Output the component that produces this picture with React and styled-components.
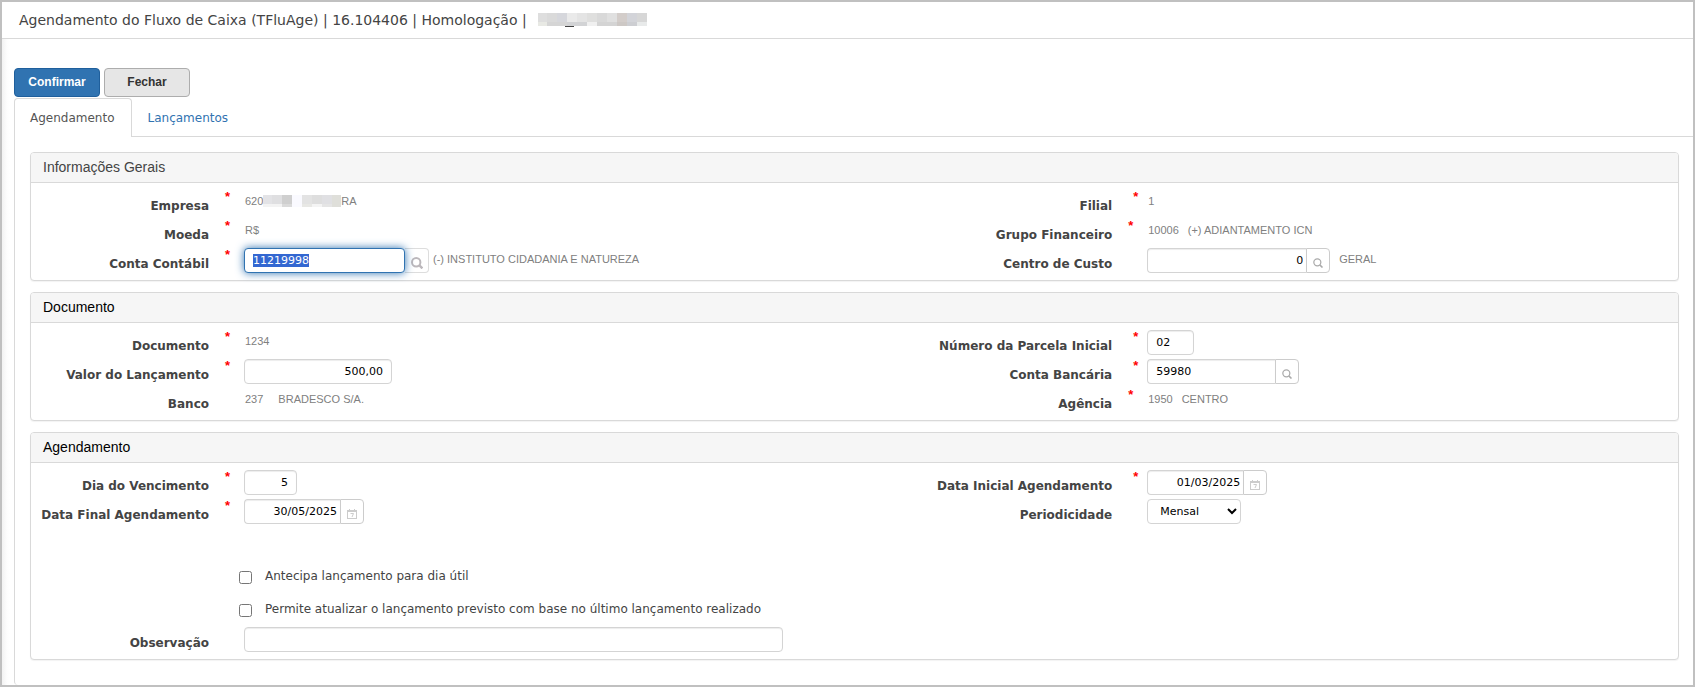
import React, { useEffect, useRef } from "react";
import styled, { createGlobalStyle } from "styled-components";

const verdana = `"DejaVu Sans", Verdana, sans-serif`;
const arial = `"Liberation Sans", Arial, sans-serif`;

const GlobalStyle = createGlobalStyle`
  *, *::before, *::after { box-sizing: border-box; }
  body { margin: 0; background: #fff; color: #444; font-family: ${verdana}; }
`;

const Page = styled.div`
  display: flex;
  flex-direction: column;
  min-height: 100vh;
  border: 2px solid #c0c0c0;
`;

const TitleBar = styled.header`
  display: flex;
  align-items: center;
  gap: 11px;
  height: 37px;
  padding-left: 17px;
  border-bottom: 1px solid #d9d9d9;
`;

const PageTitle = styled.h1`
  margin: 0;
  font-size: 14px;
  font-weight: 400;
  line-height: 20px;
  white-space: nowrap;
`;

const Body = styled.main`
  display: flex;
  flex-direction: column;
  flex: 1;
  padding: 29px 0 0 12px;
  background: linear-gradient(to right, #f2f2f2, #fdfdfd 5px, #fff 8px);
`;

const Toolbar = styled.div`
  display: flex;
  gap: 4px;
`;

const ActionButton = styled.button`
  width: 86px;
  height: 29px;
  padding: 0 0 2px;
  border: 1px solid ${(p) => (p.$primary ? "#1f5f9c" : "#adadad")};
  border-radius: 4px;
  background: ${(p) => (p.$primary ? "#3073b1" : "#e6e6e6")};
  color: ${(p) => (p.$primary ? "#fff" : "#333")};
  font: bold 12px ${arial};
`;

const TabBar = styled.nav`
  display: flex;
  margin-top: 1px;
  height: 39px;
  border-bottom: 1px solid #d9d9d9;
`;

const Tab = styled.a`
  height: 39px;
  padding: 0 16px 0 15px;
  border: 1px solid ${(p) => (p.$active ? "#d9d9d9" : "transparent")};
  border-bottom: 0;
  border-radius: 4px 4px 0 0;
  background: ${(p) => (p.$active ? "#fff" : "transparent")};
  color: ${(p) => (p.$active ? "#555" : "#3073b1")};
  font: 12px/38px ${verdana};
  text-decoration: none;
`;

const TabContent = styled.form`
  display: flex;
  flex-direction: column;
  flex: 1;
  gap: 11px;
  padding: 15px 14px 25px 15px;
  border-left: 1px solid #d9d9d9;
  border-bottom-left-radius: 4px;
`;

const Panel = styled.section`
  border: 1px solid #d9d9d9;
  border-radius: 4px;
  background: #fff;
  box-shadow: 0 1px 1px rgba(0, 0, 0, 0.05);
`;

const PanelTitle = styled.h2`
  margin: 0;
  padding-left: 12px;
  border-bottom: 1px solid #d9d9d9;
  border-radius: 3px 3px 0 0;
  background: #f6f6f6;
  color: ${(p) => (p.$muted ? "#444" : "#000")};
  font: 14px/29px ${arial};
`;

const Fields = styled.div`
  display: grid;
  grid-template-columns: 17fr 14fr;
  row-gap: 4px;
  padding: 7px 0;
`;

const FieldRow = styled.div`
  display: flex;
  height: 25px;
  grid-column: ${(p) => (p.$wide ? "1 / -1" : "auto")};
`;

const Label = styled.label`
  width: 178px;
  padding-top: 7px;
  text-align: right;
  white-space: nowrap;
  font: bold 12px/18px ${verdana};
`;

const Required = styled.span`
  width: 35px;
  padding-left: ${(p) => (p.$far ? 21 : 16)}px;
  color: #f00;
  font: bold 13px/13px ${arial};
`;

const Value = styled.output`
  display: flex;
  gap: ${(p) => p.$gap || 0}px;
  margin-left: ${(p) => p.$indent ?? 1}px;
  color: #808080;
  font: 11px/23px ${arial};
  white-space: pre;
`;

const TextInput = styled.input`
  width: ${(p) => p.$width}px;
  height: 25px;
  padding: 0 ${(p) => (p.$joined ? 3 : 8)}px 0 8px;
  border: 1px solid #d4d4d4;
  border-right-width: ${(p) => (p.$joined ? 0 : 1)}px;
  border-radius: ${(p) => (p.$joined ? "4px 0 0 4px" : "4px")};
  background: #fff;
  box-shadow: inset 0 1px 1px rgba(0, 0, 0, 0.075);
  color: #000;
  font: 11px ${verdana};
  text-align: ${(p) => (p.$right ? "right" : "left")};
  outline: 0;

  &:focus {
    z-index: 1;
    border: 1px solid #3073b1;
    border-radius: 4px;
    box-shadow: 0 0 8px #3073b1;
  }
  &::selection {
    background: #3367d1;
    color: #fff;
  }
`;

const Addon = styled.button`
  display: flex;
  align-items: center;
  justify-content: center;
  width: 24px;
  height: 25px;
  padding: 4px 0 0;
  border: 1px solid ${(p) => (p.$open ? "#ddd" : "#ccc")};
  border-left-width: ${(p) => (p.$open ? 0 : 1)}px;
  border-radius: 0 4px 4px 0;
  background: #fff;
  color: ${(p) => (p.$open ? "#bcb8bc" : "#aaa")};
`;

const Select = styled.select`
  width: 94px;
  height: 25px;
  padding: 0 0 0 8px;
  border: 1px solid #d4d4d4;
  border-radius: 4px;
  background: #fff;
  color: #000;
  font: 11px ${verdana};
`;

const Checks = styled.div`
  display: flex;
  flex-direction: column;
  grid-column: 1 / -1;
  gap: 8px;
  padding: 37px 0 0 208px;
`;

const CheckRow = styled.label`
  display: flex;
  align-items: center;
  gap: 13px;
  height: 25px;
  font: 12px/20px ${verdana};
`;

const CheckBox = styled.input`
  width: 13px;
  height: 13px;
  margin: 0;
`;

const CheckText = styled.span`
  padding-bottom: 3px;
`;

const MaskedSvg = styled.svg`
  display: block;
  flex: none;
  margin-top: ${(p) => p.$top || 0}px;
`;

const Masked = ({ cells, width, height, top }) => (
  <MaskedSvg width={width} height={height} $top={top} aria-hidden="true">
    {cells.map(([x, y, w, h, fill], i) => (
      <rect key={i} x={x} y={y} width={w} height={h} fill={fill} />
    ))}
  </MaskedSvg>
);

const userCells = [
  [0, 0, 9, 9, "#dedede"], [9, 0, 10, 9, "#dadada"], [19, 0, 10, 9, "#d6d7dc"],
  [29, 0, 10, 9, "#eaeaea"], [39, 0, 10, 9, "#e4e4e4"], [49, 0, 10, 9, "#dfdfde"],
  [59, 0, 10, 9, "#d9d9d9"], [69, 0, 10, 9, "#e0e0e0"], [79, 0, 10, 9, "#d3cdca"],
  [89, 0, 10, 9, "#d3d4d9"], [99, 0, 10, 9, "#d7d7d7"],
  [0, 9, 9, 4, "#e8e9e4"], [9, 9, 20, 4, "#d5d5d5"], [29, 9, 20, 4, "#d2d3d5"],
  [49, 9, 10, 4, "#f0f0f0"], [59, 9, 20, 4, "#d4d4d4"], [79, 9, 10, 4, "#cdc8c5"],
  [89, 9, 10, 4, "#cdced2"], [99, 9, 10, 4, "#e8eaea"], [27, 13, 9, 1, "#444"],
];

const companyCells = [
  [0, 0, 9, 9, "#e3e3e6"], [9, 0, 10, 9, "#dfdfe1"], [19, 0, 10, 9, "#cfcfcf"],
  [29, 0, 10, 12, "#fafaff"], [39, 0, 10, 9, "#e3e3e3"], [49, 0, 10, 9, "#dedede"],
  [59, 0, 10, 9, "#e0e0e3"], [69, 0, 9, 12, "#dfdfda"],
  [0, 9, 19, 3, "#f3f3f3"], [19, 9, 10, 3, "#dadada"], [39, 9, 10, 3, "#e8e8e5"],
  [49, 9, 10, 3, "#f4f4f4"], [59, 9, 10, 3, "#e5e5e5"],
];

const SearchIcon = ({ size = 10, weight = 1.5 }) => (
  <svg width={size} height={size} viewBox="0 0 12 12" fill="none" stroke="currentColor" aria-hidden="true">
    <circle cx="5.2" cy="5.2" r="4.2" strokeWidth={weight} />
    <path d="M8.2 8.2L11.4 11.4" strokeWidth={weight + 0.4} />
  </svg>
);

const CalendarIcon = () => (
  <svg width="10" height="10" viewBox="0 0 10 10" fill="none" stroke="#ccc" aria-hidden="true">
    <rect x=".5" y="1.5" width="9" height="8" />
    <path d="M0 2.5h10M2.5 0v2M7.5 0v2M3.5 4.5h3L5 8" />
  </svg>
);

const Field = ({ id, label, required, far, wide, children }) => (
  <FieldRow $wide={wide}>
    <Label htmlFor={id}>{label}</Label>
    <Required $far={far}>{required ? "*" : ""}</Required>
    {children}
  </FieldRow>
);

export default function App() {
  const account = useRef(null);
  useEffect(() => {
    account.current.focus();
    account.current.select();
  }, []);

  return (
    <>
      <GlobalStyle />
      <Page>
        <TitleBar>
          <PageTitle>Agendamento do Fluxo de Caixa (TFluAge) | 16.104406 | Homologação |</PageTitle>
          <Masked cells={userCells} width={109} height={14} />
        </TitleBar>
        <Body>
          <Toolbar>
            <ActionButton type="submit" form="agendamento" $primary>Confirmar</ActionButton>
            <ActionButton type="button">Fechar</ActionButton>
          </Toolbar>
          <TabBar>
            <Tab href="#agendamento" $active>Agendamento</Tab>
            <Tab href="#lancamentos">Lançamentos</Tab>
          </TabBar>
          <TabContent id="agendamento">
            <Panel>
              <PanelTitle $muted>Informações Gerais</PanelTitle>
              <Fields>
                <Field id="empresa" label="Empresa" required>
                  <Value id="empresa">
                    620<Masked cells={companyCells} width={78} height={12} top={5} />RA
                  </Value>
                </Field>
                <Field id="filial" label="Filial" required far>
                  <Value id="filial">1</Value>
                </Field>
                <Field id="moeda" label="Moeda" required>
                  <Value id="moeda">R$</Value>
                </Field>
                <Field id="grupo" label="Grupo Financeiro" required>
                  <Value id="grupo" $gap={9}><span>10006</span><span>(+) ADIANTAMENTO ICN</span></Value>
                </Field>
                <Field id="conta" label="Conta Contábil" required>
                  <TextInput id="conta" ref={account} $width={161} defaultValue="11219998" />
                  <Addon type="button" aria-label="Pesquisar conta contábil" $open>
                    <SearchIcon size={12} weight={2} />
                  </Addon>
                  <Value $indent={4}>(-) INSTITUTO CIDADANIA E NATUREZA</Value>
                </Field>
                <Field id="custo" label="Centro de Custo">
                  <TextInput id="custo" $width={159} $joined $right defaultValue="0" />
                  <Addon type="button" aria-label="Pesquisar centro de custo"><SearchIcon /></Addon>
                  <Value $indent={9}>GERAL</Value>
                </Field>
              </Fields>
            </Panel>

            <Panel>
              <PanelTitle>Documento</PanelTitle>
              <Fields>
                <Field id="documento" label="Documento" required>
                  <Value id="documento">1234</Value>
                </Field>
                <Field id="parcela" label="Número da Parcela Inicial" required far>
                  <TextInput id="parcela" $width={47} defaultValue="02" />
                </Field>
                <Field id="valor" label="Valor do Lançamento" required>
                  <TextInput id="valor" $width={148} $right defaultValue="500,00" />
                </Field>
                <Field id="bancaria" label="Conta Bancária" required far>
                  <TextInput id="bancaria" $width={128} $joined defaultValue="59980" />
                  <Addon type="button" aria-label="Pesquisar conta bancária"><SearchIcon /></Addon>
                </Field>
                <Field id="banco" label="Banco">
                  <Value id="banco" $gap={15}><span>237</span><span>BRADESCO S/A.</span></Value>
                </Field>
                <Field id="agencia" label="Agência" required>
                  <Value id="agencia" $gap={9}><span>1950</span><span>CENTRO</span></Value>
                </Field>
              </Fields>
            </Panel>

            <Panel>
              <PanelTitle>Agendamento</PanelTitle>
              <Fields>
                <Field id="dia" label="Dia do Vencimento" required>
                  <TextInput id="dia" $width={53} $right defaultValue="5" />
                </Field>
                <Field id="inicial" label="Data Inicial Agendamento" required far>
                  <TextInput id="inicial" $width={96} $joined $right defaultValue="01/03/2025" />
                  <Addon type="button" aria-label="Escolher data inicial"><CalendarIcon /></Addon>
                </Field>
                <Field id="final" label="Data Final Agendamento" required>
                  <TextInput id="final" $width={96} $joined $right defaultValue="30/05/2025" />
                  <Addon type="button" aria-label="Escolher data final"><CalendarIcon /></Addon>
                </Field>
                <Field id="periodicidade" label="Periodicidade">
                  <Select id="periodicidade" defaultValue="Mensal">
                    <option>Mensal</option>
                  </Select>
                </Field>
                <Checks>
                  <CheckRow>
                    <CheckBox type="checkbox" />
                    <CheckText>Antecipa lançamento para dia útil</CheckText>
                  </CheckRow>
                  <CheckRow>
                    <CheckBox type="checkbox" />
                    <CheckText>Permite atualizar o lançamento previsto com base no último lançamento realizado</CheckText>
                  </CheckRow>
                </Checks>
                <Field id="observacao" label="Observação" wide>
                  <TextInput id="observacao" $width={539} />
                </Field>
              </Fields>
            </Panel>
          </TabContent>
        </Body>
      </Page>
    </>
  );
}
